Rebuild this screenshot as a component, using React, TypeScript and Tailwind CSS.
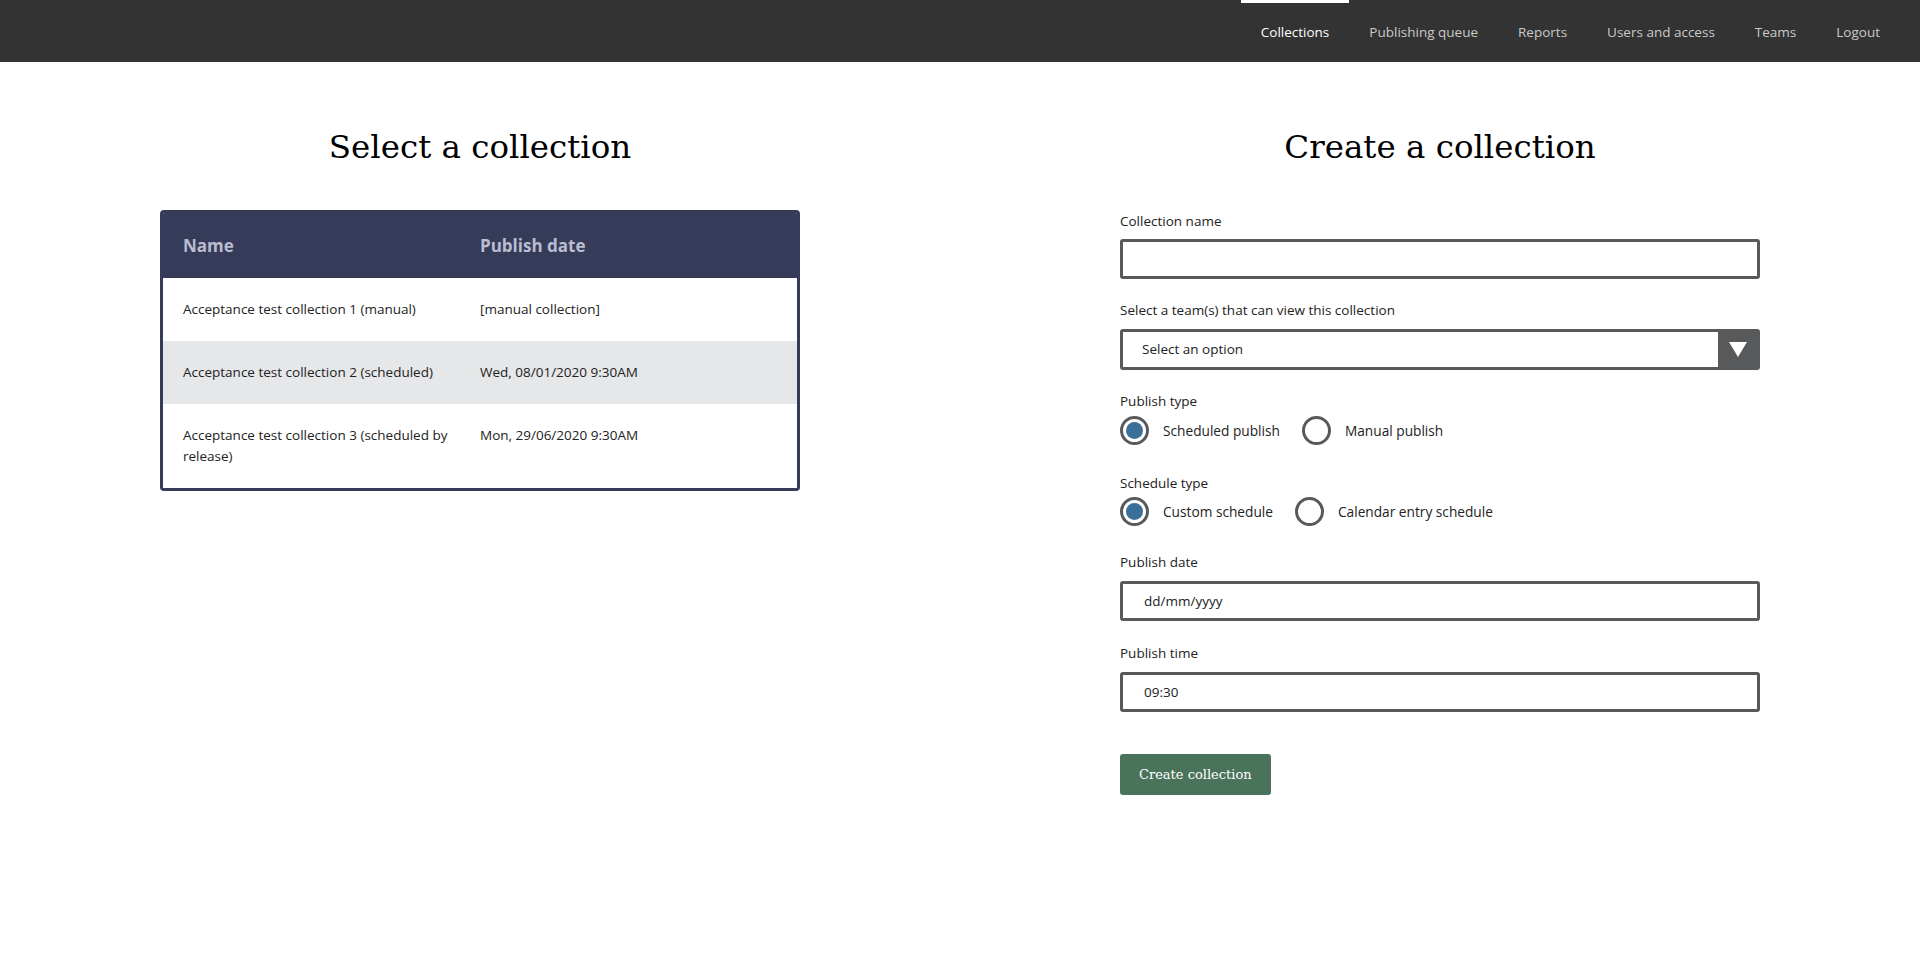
import React from "react";

const navItems = ["Collections", "Publishing queue", "Reports", "Users and access", "Teams", "Logout"];

const rows = [
  { name: "Acceptance test collection 1 (manual)", date: "[manual collection]", bg: "bg-white" },
  { name: "Acceptance test collection 2 (scheduled)", date: "Wed, 08/01/2020 9:30AM", bg: "bg-[#e6e7e9]" },
  { name: "Acceptance test collection 3 (scheduled by release)", date: "Mon, 29/06/2020 9:30AM", bg: "bg-white" },
];

function Radio({ checked, label }: { checked: boolean; label: string }) {
  return (
    <div className="flex items-center mr-[22px]">
      <span className="w-[29px] h-[29px] rounded-full border-[3px] border-[#58595b] bg-white flex items-center justify-center">
        {checked && <span className="w-[17px] h-[17px] rounded-full bg-[#3a6f98]" />}
      </span>
      <span className="ml-[14px] text-[13.7px] leading-[21px] text-[#222]">{label}</span>
    </div>
  );
}

function Label({ children }: { children: React.ReactNode }) {
  return <div className="text-[13.5px] leading-[21px] text-[#222]">{children}</div>;
}

export default function App() {
  return (
    <div className="min-h-[979px] bg-white font-['Open_Sans',sans-serif] text-[#222]">
      <nav className="h-[62px] bg-[#333333] flex justify-end pr-[20px]">
        {navItems.map((item, i) => (
          <div
            key={item}
            className={
              i === 0
                ? "h-full px-[20px] pt-[3px] flex items-center text-[13.5px] text-white shadow-[inset_0_3px_0_#ffffff]"
                : "h-full px-[20px] pt-[3px] flex items-center text-[13.5px] text-[#c9c9c9]"
            }
          >
            {item}
          </div>
        ))}
      </nav>

      <div className="grid grid-cols-2">
        <div className="flex flex-col items-center">
          <h1 className="mt-[63px] h-[85px] text-[32.5px] leading-[44px] font-['DejaVu_Serif',serif] text-black">
            Select a collection
          </h1>
          <div className="w-[640px] border-[3px] border-[#363b59] rounded-[4px] overflow-hidden">
            <table className="w-full border-collapse text-[13.5px] leading-[21px]">
              <thead>
                <tr className="bg-[#363b59] h-[65px]">
                  <th className="w-[307px] text-left font-bold text-[17px] text-[#b9bdcf] pl-[20px]">Name</th>
                  <th className="text-left font-bold text-[17px] text-[#b9bdcf] pl-[10px]">Publish date</th>
                </tr>
              </thead>
              <tbody>
                {rows.map((r) => (
                  <tr key={r.name} className={r.bg}>
                    <td className="w-[307px] align-top pl-[20px] pr-[12px] py-[21px] text-[#222]">{r.name}</td>
                    <td className="align-top pl-[10px] pr-[12px] py-[21px] text-[#222]">{r.date}</td>
                  </tr>
                ))}
              </tbody>
            </table>
          </div>
        </div>

        <div className="flex flex-col items-center">
          <h1 className="mt-[63px] h-[85px] text-[32.5px] leading-[44px] font-['DejaVu_Serif',serif] text-black">
            Create a collection
          </h1>
          <div className="w-[640px] flex flex-col pt-[1px]">
            <Label>Collection name</Label>
            <div className="mt-[7px] h-[40px] border-[3px] border-[#58595b] rounded-[3px]" />

            <div className="mt-[21px]">
              <Label>Select a team(s) that can view this collection</Label>
            </div>
            <div className="mt-[8px] h-[41px] border-[3px] border-[#58595b] rounded-[3px] flex items-stretch">
              <div className="flex-1 flex items-center pl-[19px] text-[13.5px]">Select an option</div>
              <div className="w-[39px] bg-[#58595b] flex items-center justify-center">
                <svg width="20" height="17" viewBox="0 0 20 17">
                  <polygon points="1,1 19,1 10,16" fill="#ffffff" />
                </svg>
              </div>
            </div>

            <div className="mt-[21px]">
              <Label>Publish type</Label>
            </div>
            <div className="mt-[4px] flex items-center">
              <Radio checked label="Scheduled publish" />
              <Radio checked={false} label="Manual publish" />
            </div>

            <div className="mt-[28px]">
              <Label>Schedule type</Label>
            </div>
            <div className="mt-[3px] flex items-center">
              <Radio checked label="Custom schedule" />
              <Radio checked={false} label="Calendar entry schedule" />
            </div>

            <div className="mt-[26px]">
              <Label>Publish date</Label>
            </div>
            <div className="mt-[8px] h-[40px] border-[3px] border-[#58595b] rounded-[3px] flex items-center pl-[21px] text-[13.5px]">
              dd/mm/yyyy
            </div>

            <div className="mt-[22px]">
              <Label>Publish time</Label>
            </div>
            <div className="mt-[8px] h-[40px] border-[3px] border-[#58595b] rounded-[3px] flex items-center pl-[21px] text-[13.5px]">
              09:30
            </div>

            <div className="mt-[42px]">
              <button className="h-[41px] px-[19px] bg-[#4a735c] rounded-[3px] text-white text-[13px] font-['DejaVu_Serif',serif]">
                Create collection
              </button>
            </div>
          </div>
        </div>
      </div>
    </div>
  );
}
